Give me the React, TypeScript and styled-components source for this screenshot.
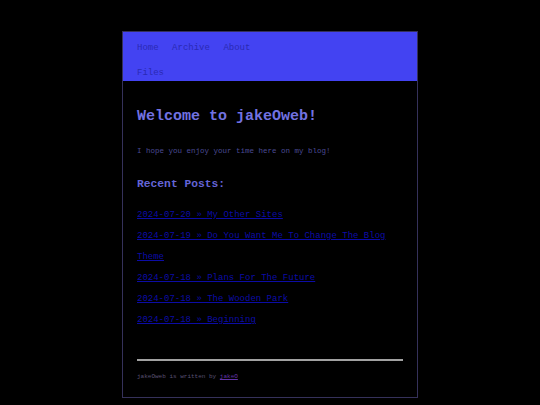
import { createGlobalStyle, styled } from "styled-components";

const GlobalStyle = createGlobalStyle`
  html, body {
    margin: 0;
    padding: 0;
    background: #000;
  }
  body {
    font-family: "Liberation Mono", "Courier New", monospace;
  }
`

const Page = styled.div`
  width: 540px;
  height: 405px;
  overflow: hidden;
  padding-top: 31px;
  box-sizing: border-box;
`

const Frame = styled.div`
  width: 296px;
  margin: 0 auto;
  border: 1px solid #35315a;
  box-sizing: border-box;
  background: #000;
`

const Nav = styled.nav`
  height: 49px;
  background: #4343f2;
  padding: 4px 14px 0 14px;
  box-sizing: border-box;
  overflow: hidden;
`

const NavList = styled.div`
  display: flex;
  flex-wrap: wrap;
  column-gap: 13.5px;
  max-width: 128px;
`

const NavLink = styled.a`
  font-size: 9px;
  line-height: 25px;
  color: #2a2ab4;
  text-decoration: none;
`

const Content = styled.main`
  padding: 0 14px 16px 14px;
`

const Title = styled.h1`
  margin: 27px 0 0 0;
  font-size: 15px;
  line-height: 18px;
  font-weight: bold;
  color: #7272e2;
`

const Intro = styled.p`
  margin: 20px 0 0 0;
  font-size: 7.5px;
  line-height: 10px;
  color: #4a4a94;
`

const SubTitle = styled.h2`
  margin: 21px 0 0 0;
  font-size: 11.3px;
  line-height: 14px;
  font-weight: bold;
  color: #6464d6;
`

const PostList = styled.div`
  margin-top: 14px;
  display: flex;
  flex-direction: column;
`

const PostItem = styled.div`
  font-size: 9px;
  line-height: 21px;
`

const PostLink = styled.a`
  color: #0c0ca6;
  text-decoration: underline;
`

const Rule = styled.hr`
  margin: 28px 0 0 0;
  border: none;
  height: 2px;
  background: #a2a2a2;
`

const Footer = styled.footer`
  margin-top: 12px;
  font-size: 6px;
  line-height: 8px;
  color: #5a5274;
`

const FooterLink = styled.a`
  color: #6234a6;
  text-decoration: underline;
`

const posts = [
  "2024-07-20 » My Other Sites",
  "2024-07-19 » Do You Want Me To Change The Blog Theme",
  "2024-07-18 » Plans For The Future",
  "2024-07-18 » The Wooden Park",
  "2024-07-18 » Beginning",
]

const App = () => {
  return (
    <Page>
      <GlobalStyle />
      <Frame>
        <Nav>
          <NavList>
            <NavLink href="#">Home</NavLink>
            <NavLink href="#">Archive</NavLink>
            <NavLink href="#">About</NavLink>
            <NavLink href="#">Files</NavLink>
          </NavList>
        </Nav>
        <Content>
          <Title>Welcome to jakeOweb!</Title>
          <Intro>I hope you enjoy your time here on my blog!</Intro>
          <SubTitle>Recent Posts:</SubTitle>
          <PostList>
            {posts.map(p => (
              <PostItem key={p}>
                <PostLink href="#">{p}</PostLink>
              </PostItem>
            ))}
          </PostList>
          <Rule />
          <Footer>
            jakeOweb is written by <FooterLink href="#">jakeO</FooterLink>
          </Footer>
        </Content>
      </Frame>
    </Page>
  )
}

export default App;
